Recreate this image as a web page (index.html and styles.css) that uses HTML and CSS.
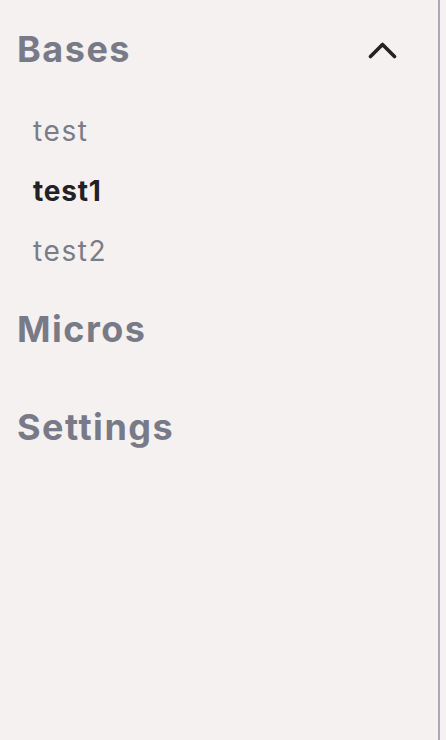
FILE: index.html
```html
<!DOCTYPE html>
<html lang="en">
<head>
<meta charset="utf-8">
<title>Sidebar</title>
<link rel="stylesheet" href="styles.css">
</head>
<body>
<aside class="sidebar">
  <section class="group open">
    <div class="group-head">
      <span class="group-title">Bases</span>
      <svg class="chevron" width="30" height="18" viewBox="0 0 30 18" aria-hidden="true">
        <polyline points="2.5,15.5 14.5,3.5 26.5,15.5" fill="none" stroke="#222226" stroke-width="3.6" stroke-linecap="round" stroke-linejoin="round"/>
      </svg>
    </div>
    <ul class="items">
      <li class="item">test</li>
      <li class="item active">test1</li>
      <li class="item">test2</li>
    </ul>
  </section>
  <section class="group">
    <div class="group-head"><span class="group-title">Micros</span></div>
  </section>
  <section class="group">
    <div class="group-head"><span class="group-title">Settings</span></div>
  </section>
</aside>
</body>
</html>
```
FILE: styles.css
```css
html, body {
  margin: 0;
  padding: 0;
  height: 100%;
  background: #f5f1f0;
}
body {
  font-family: Inter, "Liberation Sans", sans-serif;
}
.sidebar {
  box-sizing: border-box;
  width: 440px;
  height: 100%;
  border-right: 2px solid #a9a9b8;
  padding: 29px 40px 0 17px;
  display: flex;
  flex-direction: column;
}
.group {
  padding-bottom: 58px;
}
.group.open {
  padding-bottom: 28px;
}
.group-head {
  display: flex;
  align-items: center;
  justify-content: space-between;
  height: 40px;
}
.group-title {
  font-size: 36px;
  line-height: 40px;
  font-weight: 700;
  color: #787a87;
  letter-spacing: 1.5px;
}
.chevron {
  display: block;
  margin-top: 2px;
}
.items {
  list-style: none;
  margin: 32px 0 0;
  padding: 0 0 0 16px;
}
.item {
  font-size: 28px;
  line-height: 60px;
  color: #7a7c89;
  letter-spacing: 1.6px;
}
.item.active {
  font-weight: 700;
  color: #222226;
  letter-spacing: 0.8px;
}
```
